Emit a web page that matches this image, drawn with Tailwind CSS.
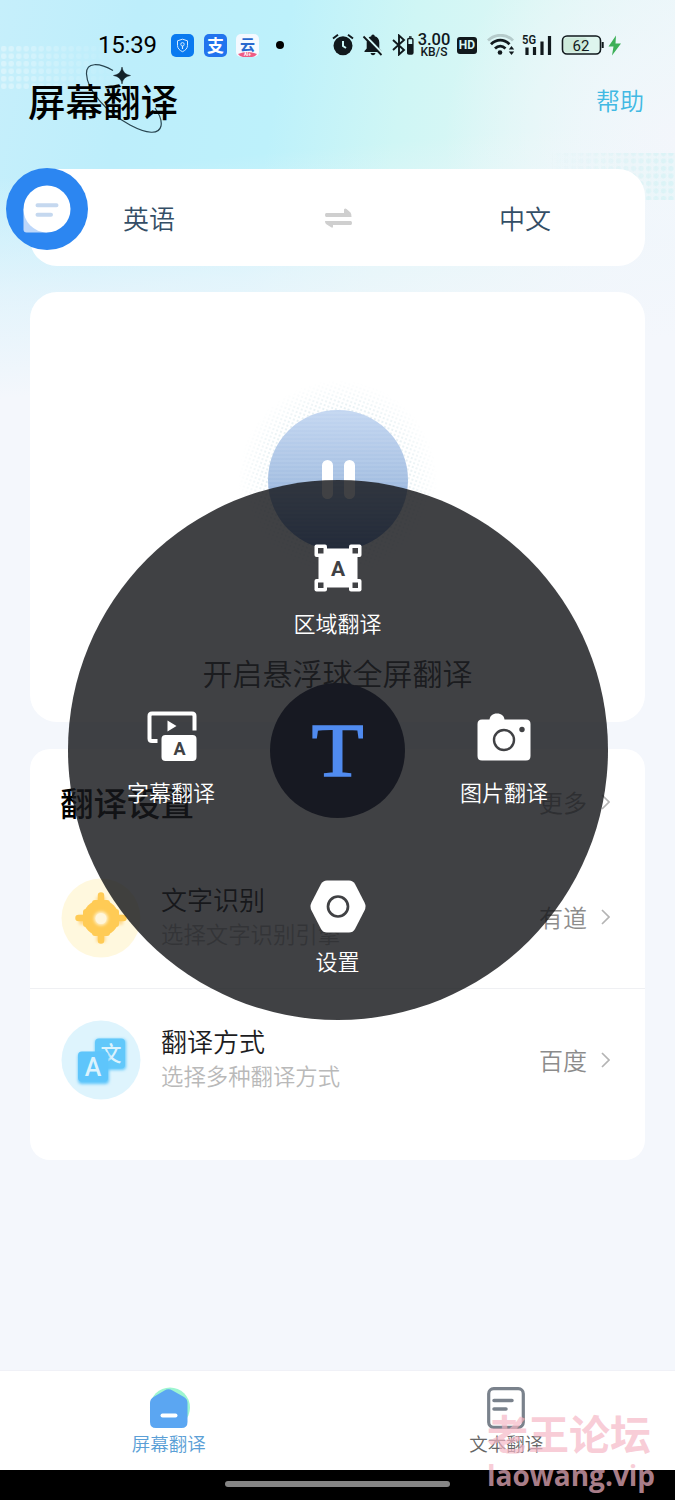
<!DOCTYPE html>
<html lang="zh-CN">
<head>
<meta charset="utf-8">
<title>屏幕翻译</title>
<script src="https://cdn.jsdelivr.net/npm/@tailwindcss/browser@4"></script>
</head>
<body class="bg-[#f4f7fd]">
<div class="relative flex h-[1500px] w-[675px] flex-col overflow-hidden bg-[#f4f7fc] font-['Noto_Sans_CJK_SC',sans-serif]">
  <!-- header background -->
  <svg class="absolute left-0 top-0" width="675" height="440" viewBox="0 0 675 440">
    <defs>
      <linearGradient id="sky" x1="0" y1="0" x2="675" y2="120" gradientUnits="userSpaceOnUse">
        <stop offset="0" stop-color="#c6effb"/><stop offset=".2" stop-color="#bdeefb"/><stop offset=".42" stop-color="#bdf1fb"/>
        <stop offset=".6" stop-color="#cff6f5"/><stop offset=".8" stop-color="#def7f5"/><stop offset="1" stop-color="#ebf6f9"/>
      </linearGradient>
      <linearGradient id="fade" x1="300" y1="150" x2="320" y2="370" gradientUnits="userSpaceOnUse">
        <stop offset="0" stop-color="#f4f7fc" stop-opacity="0"/><stop offset=".55" stop-color="#f2f6fc" stop-opacity=".7"/><stop offset="1" stop-color="#f4f7fc"/>
      </linearGradient>
      <radialGradient id="glow" cx="675" cy="140" r="230" gradientUnits="userSpaceOnUse">
        <stop offset="0" stop-color="#f3f6fb"/><stop offset=".4" stop-color="#f0f7fb" stop-opacity=".8"/><stop offset="1" stop-color="#f0f7fb" stop-opacity="0"/>
      </radialGradient>
      <pattern id="dots" width="7.5" height="7.5" patternUnits="userSpaceOnUse"><rect x="1" y="1" width="5.5" height="5.5" rx="2" fill="#fff" fill-opacity=".36"/></pattern>
      <pattern id="dots2" width="7.5" height="7.5" patternUnits="userSpaceOnUse"><rect x="1" y="1" width="5" height="5" rx="2" fill="#bdeff3" fill-opacity=".36"/></pattern>
      <linearGradient id="m1"><stop offset="0" stop-color="#fff"/><stop offset="1" stop-color="#000"/></linearGradient>
      <linearGradient id="m2"><stop offset="0" stop-color="#000"/><stop offset="1" stop-color="#fff"/></linearGradient>
      <mask id="k1"><rect x="0" y="40" width="120" height="60" fill="url(#m1)"/></mask>
      <mask id="k2"><rect x="550" y="150" width="125" height="60" fill="url(#m2)"/></mask>
    </defs>
    <rect width="675" height="440" fill="url(#sky)"/>
    <rect width="675" height="440" fill="url(#glow)"/>
    <rect width="675" height="440" fill="url(#fade)"/>
    <rect x="0" y="45" width="120" height="45" fill="url(#dots)" mask="url(#k1)"/>
    <rect x="550" y="153" width="125" height="47" fill="#d9f6f4" fill-opacity=".3" mask="url(#k2)"/>
    <rect x="550" y="153" width="125" height="47" fill="url(#dots2)" mask="url(#k2)"/>
  </svg>

  <!-- status bar -->
  <header class="relative flex h-[68px] items-center pl-[98px] pt-[22px] text-black">
    <div class="w-[73px] font-[Roboto] text-[24px] leading-none tracking-[-0.2px]"><span>15:39</span></div>
    <svg width="23" height="23" viewBox="0 0 23 23"><rect width="23" height="23" rx="5" fill="#0a7af0"/><path d="M11.500 5.200l5 1.600v4.700c0 3-2.300 5-5 6.200-2.700-1.200-5-3.200-5-6.200V6.800z" fill="none" stroke="#d5ebff" stroke-width="1"/><circle cx="11.500" cy="10.300" r="1.700" fill="none" stroke="#d5ebff"/><path d="M11.500 12v3" stroke="#d5ebff" stroke-width="1.200"/></svg>
    <div class="ml-[10px] flex h-[23px] w-[23px] items-center justify-center rounded-[5px] bg-[#2274ee] pb-[2px] text-[17px] font-bold leading-none text-white">支</div>
    <svg class="ml-[9px]" width="23" height="23" viewBox="0 0 23 23"><rect width="23" height="23" rx="5" fill="#f4f9ff"/><text x="11.500" y="15.500" text-anchor="middle" font-weight="700" font-size="15" fill="#2868ce">云</text><path d="M2 20q9.500-4 19 0-2 3-5 3H7q-3 0-5-3z" fill="#ee5b84"/><text x="11.500" y="22.300" text-anchor="middle" font-family="Roboto" font-weight="700" font-size="4.500" fill="#fff">AI+</text></svg>
    <div class="ml-[17px] h-2 w-2 rounded-full bg-black"></div>
    <svg class="ml-[47px]" width="24" height="24" viewBox="0 0 24 24"><circle cx="12" cy="12.700" r="9.500" fill="#11191d"/><path d="M2 5.500l5-3.700M22 5.500l-5-3.700" stroke="#11191d" stroke-width="2"/><path d="M12 8v5l3 2" fill="none" stroke="#cbf6f6" stroke-width="2"/></svg>
    <svg class="ml-[7px]" width="22" height="24" viewBox="0 0 22 24"><path d="M11 1.500c1 0 1.700.8 1.700 1.800 3 .8 4.600 3 4.600 6.200v6l2.200 2.500v1H2.500v-1l2.200-2.500v-6c0-3.200 1.600-5.400 4.600-6.200 0-1 .7-1.800 1.700-1.800zM8.500 20h5c-.5 1.500-1.400 2.200-2.500 2.200S9 21.500 8.500 20z" fill="#11191d"/><path d="M3 2.500l18 18.500" stroke="#d3f7f6" stroke-width="2.500"/><path d="M1.500 3.500l18 18.500" stroke="#11191d" stroke-width="1.800"/></svg>
    <svg class="ml-[8px]" width="22" height="22" viewBox="0 0 22 22"><path d="M1 6l11 10-5 4.500V1.500L12 6 1 16" fill="none" stroke="#11191d" stroke-width="1.900"/><rect x="15.700" y="4.500" width="5.200" height="15.500" rx="1.200" fill="none" stroke="#11191d" stroke-width="1.400"/><path d="M17 3h2.600" stroke="#11191d" stroke-width="1.500"/><path d="M15.500 10h5.500v10h-5.500z" fill="#11191d"/></svg>
    <div class="ml-[4px] flex w-[32px] flex-col items-center pt-px font-[Roboto] font-medium text-[#11191d]"><span class="text-[16.500px] leading-[13px]">3.00</span><span class="text-[12px] leading-[12px]">KB/S</span></div>
    <div class="ml-[7px] flex h-[17px] w-5 items-center justify-center rounded-[3px] bg-[#11191d] font-[Roboto] text-[12px] font-bold leading-none text-[#d8f8f5]">HD</div>
    <svg class="ml-[10px]" width="28" height="22" viewBox="0 0 28 22"><g fill="none" stroke-width="2.800"><path d="M1 6.500C8-.5 19-.5 26 6.500" stroke="#b5cbcb"/><path d="M4 10.300c5.500-5.500 13-5.500 18.500 0M8 14.500c3.200-3 7.300-3 10.500 0" stroke="#11191d"/></g><circle cx="13" cy="18.500" r="2.300" fill="#11191d"/><path d="M24.500 12l2.700 3.500h-5.400zM24.500 21l2.700-3.500h-5.400z" fill="#11191d"/></svg>
    <svg class="ml-[7px]" width="31" height="24" viewBox="0 0 31 24"><text x="0" y="10.500" font-family="Roboto" font-weight="600" font-size="12.500" textLength="14" lengthAdjust="spacingAndGlyphs" fill="#11191d">5G</text><path d="M5 14.500v7.500M12.500 14v8M20 8.500V22M27.500 3v19" stroke="#11191d" stroke-width="3.200"/></svg>
    <svg class="ml-[8px]" width="63" height="24" viewBox="0 0 63 24"><rect x="1.500" y="3" width="38" height="18" rx="4.500" fill="#def5ee" stroke="#11191d" stroke-width="1.600"/><rect x="3" y="4.500" width="23" height="15" rx="3" fill="#cdeadb"/><path d="M41.700 9v6" stroke="#11191d" stroke-width="2"/><text x="20" y="17.500" text-anchor="middle" font-family="Roboto" font-size="15" fill="#11191d">62</text><path d="M55 2.500L47.500 13.500h5l-1.500 9L60 10.500h-5.500z" fill="#3db058"/></svg>
  </header>

  <!-- title row -->
  <div class="relative flex h-[101px] items-start justify-between pl-[28px] pr-[31px]">
    <div class="relative">
      <svg class="absolute left-[53px] top-[-4px]" width="90" height="80" viewBox="0 0 90 80"><path d="M32 6.500C18-1.500 5-2 5.500 10 6 26 25 48 49 61c17 9 29 10 31 1 1-5-1-11-6-18" fill="none" stroke="#27434e" stroke-width="1.200"/><path d="M41 3q1 7.500 8.500 8.500-7.500 1-8.500 8.500-1-7.500-8.500-8.500Q40 10.500 41 3z" fill="#132128" stroke="#132128" stroke-width=".5"/></svg>
      <h1 class="relative pt-px text-[37.500px] font-medium leading-[62px] text-black">屏幕翻译</h1>
    </div>
    <a class="pt-px text-[24px] font-[350] leading-[62px] text-[#41b9e3]">帮助</a>
  </div>

  <!-- language picker -->
  <section class="relative ml-[30px] flex h-[97px] w-[615px] items-center rounded-[27px] bg-white text-[26px] font-[350] text-[#344e66]">
    <div class="ml-[93px] w-[201px]">英语</div>
    <svg width="28" height="20" viewBox="0 0 28 20"><path d="M2 5h18V1.500q1-1.500 2.500-.5l4 3.500q1 1 1 4.500H2q-1-.5-1-2t1-2zM1 13h26q1 .5 1 2t-1 2H9v2.500H7.500L2 16q-1-1-1-3z" fill="#cfcfcf"/></svg>
    <div class="ml-[147px]">中文</div>
    <svg class="absolute left-[-24px] top-[-1px]" width="82" height="82" viewBox="0 0 82 82"><circle cx="41" cy="41" r="41" fill="#2c86f1"/><path d="M17.500 41v20.500a3 3 0 0 0 3 3H41z" fill="#bdd7fa"/><circle cx="41" cy="41" r="23.500" fill="#fff"/><path d="M31.500 37.200h19M31.500 46.800h13.500" stroke="#c5d8ef" stroke-width="4" stroke-linecap="round"/></svg>
  </section>

  <!-- play card -->
  <section class="relative ml-[30px] mt-[26px] flex h-[430px] w-[615px] flex-col items-center rounded-[27px] bg-white">
    <svg class="mt-[88px]" width="200" height="200" viewBox="0 0 200 200">
      <defs>
        <linearGradient id="ball" x1="0" y1="0" x2="0" y2="1"><stop offset="0" stop-color="#c3d6f1"/><stop offset=".5" stop-color="#a6c0e2"/><stop offset="1" stop-color="#5c83c6"/></linearGradient>
        <pattern id="halo" width="4" height="4" patternUnits="userSpaceOnUse" patternTransform="rotate(20)"><circle cx="2" cy="2" r=".9" fill="#dbe9ee"/></pattern>
        <radialGradient id="hg"><stop offset=".7" stop-color="#fff"/><stop offset="1" stop-color="#000"/></radialGradient>
        <mask id="hm"><circle cx="100" cy="100" r="100" fill="url(#hg)"/></mask>
        <pattern id="scan" width="4" height="4" patternUnits="userSpaceOnUse"><path d="M0 1h4" stroke="#fff" stroke-opacity=".12"/></pattern>
      </defs>
      <circle cx="100" cy="100" r="99" fill="url(#halo)" mask="url(#hm)"/>
      <circle cx="100" cy="100" r="70" fill="url(#ball)"/><circle cx="100" cy="100" r="70" fill="url(#scan)"/>
      <path d="M89.500 85.500v28M111.500 85.500v28" stroke="#fff" stroke-width="11" stroke-linecap="round"/>
    </svg>
    <p class="mt-[70px] text-[30px] font-[350] leading-[44px] text-[#333]">开启悬浮球全屏翻译</p>
  </section>

  <!-- settings card -->
  <section class="relative ml-[30px] mt-[27px] flex h-[411px] w-[615px] flex-col rounded-[20px] bg-white">
    <div class="flex h-[98px] items-center justify-between pl-[30px] pr-[35px] pt-2">
      <h2 class="text-[33.500px] font-medium leading-none text-black">翻译设置</h2>
      <div class="flex items-center gap-[14px] text-[24px] font-[350] text-[#999]">更多<svg width="9" height="16" viewBox="0 0 9 16"><path d="M1 1l7 7-7 7" fill="none" stroke="#b4b4b4" stroke-width="1.700"/></svg></div>
    </div>
    <div class="flex h-[142px] items-center border-b-[1.500px] border-[#eff0f3] pl-[31px] pr-[35px]">
      <svg width="80" height="80" viewBox="0 0 80 80"><defs><filter id="soft" x="-30%" y="-30%" width="160%" height="160%"><feGaussianBlur stdDeviation="1.800"/></filter></defs><circle cx="40" cy="40" r="39.500" fill="#fff8de"/><path d="M40 19v45M18 42h44" stroke="#ffd98c" stroke-width="9" filter="url(#soft)"/><circle cx="40" cy="40" r="18" fill="#ffcb55"/><path d="M40 17.500v45M17.500 40h45" stroke="#ffcb55" stroke-width="6.500" stroke-linecap="round"/><path d="M34 25h12M34 55h12M25 34v12M55 34v12" stroke="#ffcb55" stroke-width="6" stroke-linecap="round"/><circle cx="40" cy="40.500" r="7" fill="#fff3d0" filter="url(#soft)"/><circle cx="40" cy="40.500" r="5.500" fill="#fff6dc"/></svg>
      <div class="ml-[20px] flex-1 pb-[7px]"><div class="text-[26px] font-[350] leading-[37px] text-[#1c1c1e]">文字识别</div><div class="text-[22.400px] font-[350] leading-[32px] text-[#b9b9b9]">选择文字识别引擎</div></div>
      <div class="flex items-center gap-[14px] pb-px text-[24px] font-[350] text-[#8c8c8c]">有道<svg width="9" height="16" viewBox="0 0 9 16"><path d="M1 1l7 7-7 7" fill="none" stroke="#b4b4b4" stroke-width="1.700"/></svg></div>
    </div>
    <div class="flex h-[142px] items-center pl-[31px] pr-[35px]">
      <svg width="80" height="80" viewBox="0 0 80 80"><circle cx="40" cy="40" r="39.500" fill="#def4fd"/><rect x="34" y="19" width="31" height="31" rx="4" fill="#63c9fb" filter="url(#soft)"/><rect x="34" y="18.500" width="30" height="30" rx="4" fill="#62c8fa"/><text x="50" y="40.500" text-anchor="middle" font-size="21" font-weight="500" fill="#dcf3fd">文</text><rect x="17" y="33" width="31" height="31" rx="4" fill="#5fc6fb" filter="url(#soft)"/><rect x="17" y="31.500" width="30" height="30" rx="4" fill="#5ec5fb"/><text x="32" y="56" text-anchor="middle" font-family="Roboto" font-size="25" font-weight="500" fill="#dcf3fd">A</text></svg>
      <div class="ml-[20px] flex-1 pb-[7px]"><div class="text-[26px] font-[350] leading-[37px] text-[#1c1c1e]">翻译方式</div><div class="text-[22.400px] font-[350] leading-[32px] text-[#b9b9b9]">选择多种翻译方式</div></div>
      <div class="flex items-center gap-[14px] pb-px text-[24px] font-[350] text-[#8c8c8c]">百度<svg width="9" height="16" viewBox="0 0 9 16"><path d="M1 1l7 7-7 7" fill="none" stroke="#b4b4b4" stroke-width="1.700"/></svg></div>
    </div>
  </section>

  <!-- tab bar -->
  <nav class="relative mt-auto flex h-[100px] border-t border-[#f0f1f7] bg-white text-[18.500px] font-[350]">
    <div class="flex flex-1 flex-col items-center pt-[15px] text-[#5b9fd6]">
      <svg width="44" height="44" viewBox="0 0 44 44"><circle cx="23" cy="21.500" r="20" fill="#9df5d0"/><path d="M3 17q0-4 3.500-6L17.500 4.500q4-2.500 8 0l11.500 6.500q3.500 2 3.500 6v19q0 6-6 6H9q-6 0-6-6z" fill="#5ba6f2"/><path d="M15.500 29.500h13" stroke="#fff" stroke-width="4" stroke-linecap="round"/></svg>
      <span class="leading-[27px]">屏幕翻译</span>
    </div>
    <div class="flex flex-1 flex-col items-center pt-[16px] text-[#666]">
      <svg width="38" height="42" viewBox="0 0 38 42"><rect x="1.700" y="1.700" width="34.600" height="38.600" rx="5" fill="none" stroke="#7a828c" stroke-width="3.200"/><path d="M7 13.500h18M7 22h12" stroke="#7a828c" stroke-width="3.500" stroke-linecap="round"/></svg>
      <span class="mt-px leading-[27px]">文本翻译</span>
    </div>
  </nav>
  <div class="relative flex h-[30px] shrink-0 justify-center bg-black pt-[11px]"><div class="h-[6px] w-[225px] rounded-full bg-[#858585]"></div></div>

  <!-- radial menu -->
  <div class="absolute left-[67.5px] top-[480px] grid h-[540px] w-[540px] grid-cols-3 grid-rows-3 rounded-full bg-[#16171b]/82 text-[22px] font-[350] leading-[32px] text-white">
    <div class="col-start-2 row-start-1 flex flex-col items-center gap-[14px] pt-[64px]">
      <svg class="ml-px" width="48" height="48" viewBox="0 0 48 48"><rect x="4.500" y="4.500" width="39" height="39" fill="#fff"/><g fill="#fff"><rect x=".5" y=".5" width="12.500" height="12.500" rx="2"/><rect x="35" y=".5" width="12.500" height="12.500" rx="2"/><rect x=".5" y="35" width="12.500" height="12.500" rx="2"/><rect x="35" y="35" width="12.500" height="12.500" rx="2"/></g><path d="M4 4h5.500v5.500H4zM38.500 4H44v5.500h-5.500zM4 38.500h5.500V44H4zM38.500 38.500H44V44h-5.500z" fill="#404144"/><text x="24" y="31.500" text-anchor="middle" font-family="Roboto" font-weight="700" font-size="21" fill="#404144">A</text></svg>
      <span>区域翻译</span>
    </div>
    <div class="col-start-1 row-start-2 flex flex-col items-center gap-[14px] pl-[27px] pt-[51px]">
      <svg class="ml-px" width="50" height="50" viewBox="0 0 50 50"><path d="M10.500 30H5q-2.500 0-2.500-2.500V5Q2.500 2.500 5 2.500h40q2.500 0 2.500 2.500v14.500" fill="none" stroke="#fff" stroke-width="4"/><path d="M20.500 9.500l9 5.500-9 5.500z" fill="#fff"/><rect x="14.500" y="24" width="35" height="26" rx="4" fill="#fff"/><text x="32.500" y="43.500" text-anchor="middle" font-family="Roboto" font-weight="700" font-size="18" fill="#404144">A</text></svg>
      <span>字幕翻译</span>
    </div>
    <div class="col-start-2 row-start-2 flex h-[135px] w-[135px] place-self-center items-center justify-center rounded-full bg-[#171922]">
      <svg width="80" height="90" viewBox="0 0 80 90"><text transform="translate(39.500 70.800) scale(1.100 1)" text-anchor="middle" font-family="Liberation Serif" font-size="77" fill="#508bf0" stroke="#508bf0" stroke-width="1.600">T</text></svg>
    </div>
    <div class="col-start-3 row-start-2 flex flex-col items-center gap-[14px] pr-[27px] pt-[52px]">
      <svg width="54" height="49" viewBox="0 0 54 49"><path d="M5 7.500h7.500C13 4 15.500 1.500 20 1.500s7 2.500 7.500 6H49q4.500 0 4.500 4.500v32q0 4.500-4.500 4.500H5Q.5 48.500.5 44V12q0-4.500 4.500-4.500z" fill="#fff"/><circle cx="27" cy="28" r="10" fill="none" stroke="#404144" stroke-width="2.400"/><circle cx="45" cy="17.500" r="2.700" fill="#404144"/></svg>
      <span>图片翻译</span>
    </div>
    <div class="col-start-2 row-start-3 flex flex-col items-center gap-[11px] pt-[40px]">
      <svg width="56" height="53" viewBox="0 -0.500 56 53"><path d="M17 0h22q4 0 6 3.500l9.500 18.500q2 4 0 8L45 48.500Q43 52 39 52H17q-4 0-6-3.500L1.500 30q-2-4 0-8L11 3.500Q13 0 17 0z" fill="#fff"/><circle cx="28" cy="26" r="10" fill="none" stroke="#404144" stroke-width="2.700"/></svg>
      <span>设置</span>
    </div>
  </div>

  <!-- watermark -->
  <div class="absolute left-[487px] top-[1403px] whitespace-nowrap font-bold text-[#f5b7c6]/70">
    <div class="text-[41px] leading-[58px]">老王论坛</div>
    <div class="mt-[-3px] font-['Open_Sans',sans-serif] text-[28px] leading-[34px]">laowang.vip</div>
  </div>
</div>
</body>
</html>
